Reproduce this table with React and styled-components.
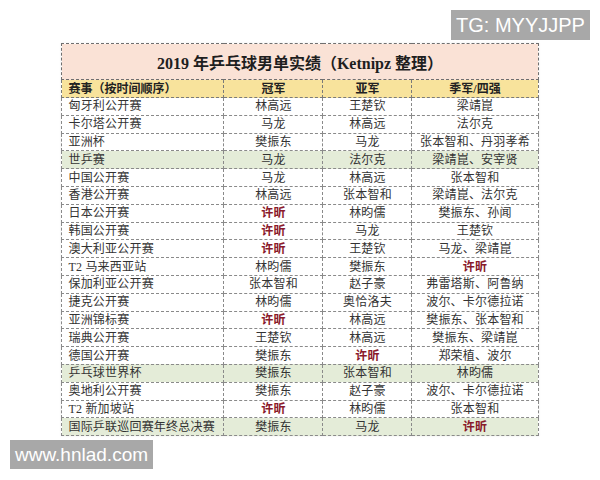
import React from "react";
import styled, { createGlobalStyle } from "styled-components";

const GlobalStyle = createGlobalStyle`
  html, body {
    margin: 0;
    padding: 0;
    background: #ffffff;
  }
  body {
    font-family: "Liberation Serif", "Noto Sans CJK SC", serif;
  }
`;

const Page = styled.div`
  position: relative;
  width: 600px;
  height: 480px;
  overflow: hidden;
  background: #ffffff;
  display: flex;
  justify-content: center;
  padding-top: 43px;
  box-sizing: border-box;
`;

const Watermark = styled.div`
  position: absolute;
  background: #a8a8a8;
  color: #ffffff;
  font-family: "Liberation Sans", Arial, sans-serif;
  font-size: ${(p) => p.size}px;
  line-height: 1;
  white-space: nowrap;
  display: flex;
  align-items: center;
  justify-content: center;
  box-sizing: border-box;
`;

const TopMark = styled(Watermark)`
  top: 10px;
  left: 451px;
  width: 139px;
  height: 30px;
`;

const BottomMark = styled(Watermark)`
  top: 440px;
  left: 10px;
  width: 143px;
  height: 29px;
`;

const Table = styled.table`
  width: 476px;
  border-collapse: collapse;
  table-layout: fixed;
  align-self: flex-start;
  border: 1px dashed #6f6f6f;
  box-shadow: 0 0 2px rgba(0, 0, 0, 0.08);
`;

const TitleCell = styled.td`
  height: 35px;
  background: #fae2d6;
  text-align: center;
  font-size: 16px;
  font-weight: bold;
  color: #1e1e1e;
  border: 1px dashed #6f6f6f;
  padding: 0;
`;

const HeadCell = styled.th`
  height: 17px;
  background: #f8e39c;
  font-size: 12px;
  font-weight: bold;
  color: #222;
  text-align: ${(p) => (p.left ? "left" : "center")};
  padding: 0 ${(p) => (p.left ? "6px" : "0")};
  border: 1px dashed #7a7a7a;
  line-height: 16px;
`;

const Row = styled.tr`
  height: 17.8px;
  background: ${(p) => (p.green ? "#e4ecd8" : "#ffffff")};
`;

const Cell = styled.td`
  font-size: 12px;
  color: #333333;
  text-align: ${(p) => (p.left ? "left" : "center")};
  padding: 0 ${(p) => (p.left ? "6px" : "0")};
  border: 1px dashed #8a8a8a;
  line-height: 16px;
  white-space: nowrap;
  letter-spacing: 0.2px;
`;

const Star = styled.span`
  color: #8a1a2b;
  font-weight: bold;
`;

const rows = [
  ["匈牙利公开赛", "林高远", "王楚钦", "梁靖崑"],
  ["卡尔塔公开赛", "马龙", "林高远", "法尔克"],
  ["亚洲杯", "樊振东", "马龙", "张本智和、丹羽孝希"],
  ["世乒赛", "马龙", "法尔克", "梁靖崑、安宰贤", true],
  ["中国公开赛", "马龙", "林高远", "张本智和"],
  ["香港公开赛", "林高远", "张本智和", "梁靖崑、法尔克"],
  ["日本公开赛", "许昕", "林昀儒", "樊振东、孙闻"],
  ["韩国公开赛", "许昕", "马龙", "王楚钦"],
  ["澳大利亚公开赛", "许昕", "王楚钦", "马龙、梁靖崑"],
  ["T2 马来西亚站", "林昀儒", "樊振东", "许昕"],
  ["保加利亚公开赛", "张本智和", "赵子豪", "弗雷塔斯、阿鲁纳"],
  ["捷克公开赛", "林昀儒", "奥恰洛夫", "波尔、卡尔德拉诺"],
  ["亚洲锦标赛", "许昕", "林高远", "樊振东、张本智和"],
  ["瑞典公开赛", "王楚钦", "林高远", "樊振东、梁靖崑"],
  ["德国公开赛", "樊振东", "许昕", "郑荣植、波尔"],
  ["乒乓球世界杯", "樊振东", "张本智和", "林昀儒", true],
  ["奥地利公开赛", "樊振东", "赵子豪", "波尔、卡尔德拉诺"],
  ["T2 新加坡站", "许昕", "林昀儒", "张本智和"],
  ["国际乒联巡回赛年终总决赛", "樊振东", "马龙", "许昕", true],
];

const Name = ({ text }) => (text === "许昕" ? <Star>{text}</Star> : text);

export default function App() {
  return (
    <>
      <GlobalStyle />
      <Page>
        <Table>
          <colgroup>
            <col style={{ width: 162 }} />
            <col style={{ width: 99 }} />
            <col style={{ width: 89 }} />
            <col style={{ width: 126 }} />
          </colgroup>
          <tbody>
            <tr>
              <TitleCell colSpan={4}>2019 年乒乓球男单实绩（Ketnipz 整理）</TitleCell>
            </tr>
            <tr>
              <HeadCell left>赛事（按时间顺序）</HeadCell>
              <HeadCell>冠军</HeadCell>
              <HeadCell>亚军</HeadCell>
              <HeadCell>季军/四强</HeadCell>
            </tr>
            {rows.map(([event, first, second, third, green]) => (
              <Row key={event} green={green ? 1 : 0}>
                <Cell left>{event}</Cell>
                <Cell><Name text={first} /></Cell>
                <Cell><Name text={second} /></Cell>
                <Cell><Name text={third} /></Cell>
              </Row>
            ))}
          </tbody>
        </Table>
        <TopMark size={20}>TG: MYYJJPP</TopMark>
        <BottomMark size={19}>www.hnlad.com</BottomMark>
      </Page>
    </>
  );
}
